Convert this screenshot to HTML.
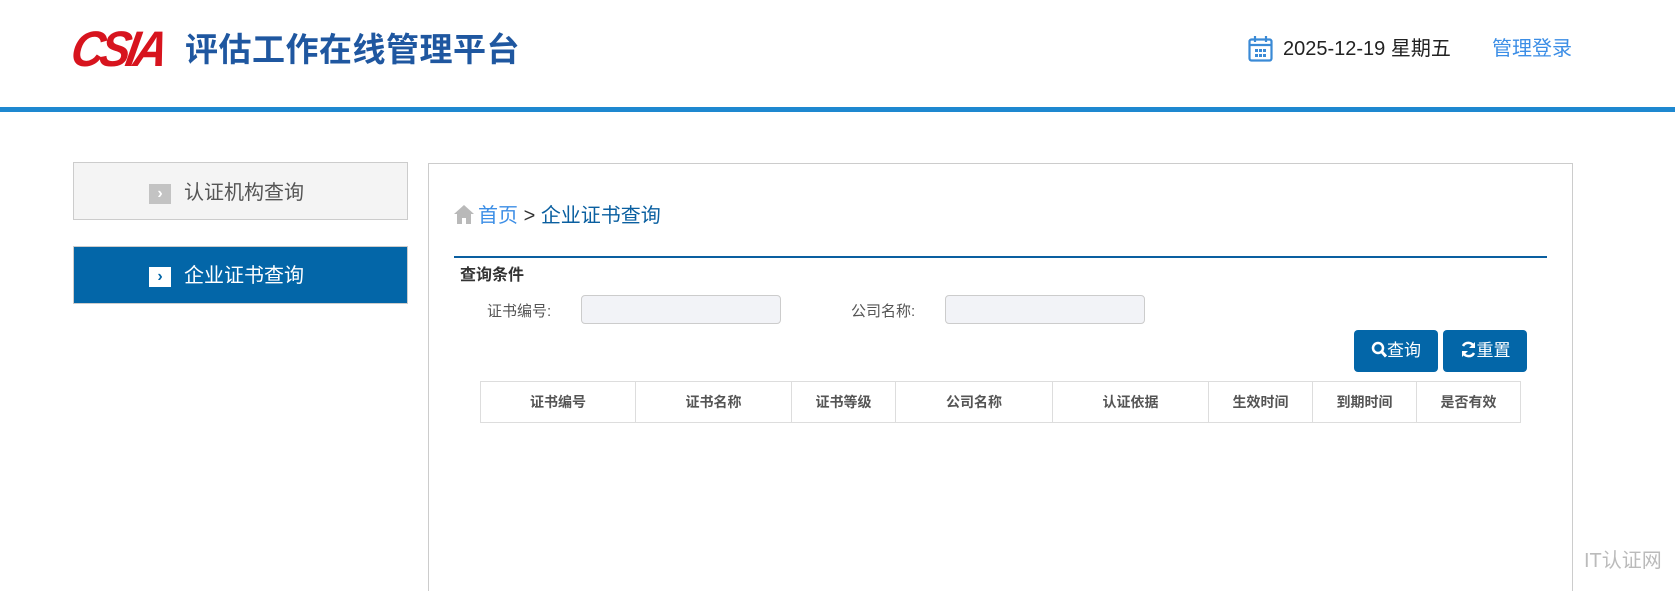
<!DOCTYPE html>
<html style="width:1675px;height:591px;overflow:hidden"><head><meta charset="utf-8"><style>
*{margin:0;padding:0;box-sizing:border-box}
body{width:1675px;height:591px;overflow:hidden;background:#fff;font-family:"Liberation Sans","Noto Sans CJK SC",sans-serif;position:relative}
.a{position:absolute;white-space:nowrap}
</style></head><body>
<div class="a" style="left:72px;top:24px;height:50px;color:#d7141e;font:italic bold 50px/50px 'Liberation Sans',sans-serif;letter-spacing:-5px;transform:skewX(-10deg) scaleX(0.92);transform-origin:left">CSIA</div>
<div class="a" style="left:185px;top:28px;font-size:33px;line-height:44px;font-weight:bold;color:#1f57a0;letter-spacing:0.5px">评估工作在线管理平台</div>
<svg class="a" style="left:1248px;top:35px" width="25" height="27" viewBox="0 0 25 27"><rect x="1.5" y="4.5" width="22" height="21" rx="2" fill="none" stroke="#3a8ad6" stroke-width="2.2"/><line x1="1.5" y1="10" x2="23.5" y2="10" stroke="#3a8ad6" stroke-width="2.2"/><line x1="7" y1="1" x2="7" y2="7" stroke="#3a8ad6" stroke-width="2.2"/><line x1="18" y1="1" x2="18" y2="7" stroke="#3a8ad6" stroke-width="2.2"/><g fill="#3a8ad6"><rect x="7" y="14" width="3" height="3"/><rect x="11" y="14" width="3" height="3"/><rect x="15" y="14" width="3" height="3"/><rect x="7" y="19" width="3" height="3"/><rect x="11" y="19" width="3" height="3"/><rect x="15" y="19" width="3" height="3"/></g></svg>
<div class="a" style="left:1283px;top:37px;font-size:20px;line-height:24px;color:#222">2025-12-19 星期五</div>
<div class="a" style="left:1492px;top:37px;font-size:20px;line-height:24px;color:#3c8ee6">管理登录</div>
<div class="a" style="left:0;top:107px;width:1675px;height:5px;background:#1e88d0"></div>

<div class="a" style="left:73px;top:162px;width:335px;height:58px;background:#f4f4f4;border:1px solid #ccc"></div>
<div class="a" style="left:149px;top:184px;width:22px;height:20px;background:#c3c3c3;color:#fff;font-size:16px;line-height:20px;text-align:center;font-weight:bold">›</div>
<div class="a" style="left:184px;top:180px;font-size:20px;line-height:26px;color:#555">认证机构查询</div>
<div class="a" style="left:73px;top:246px;width:335px;height:58px;background:#0366a8;border:1px solid #ccc"></div>
<div class="a" style="left:149px;top:267px;width:22px;height:20px;background:#fff;color:#0366a8;font-size:16px;line-height:20px;text-align:center;font-weight:bold">›</div>
<div class="a" style="left:184px;top:263px;font-size:20px;line-height:26px;color:#fff">企业证书查询</div>

<div class="a" style="left:428px;top:163px;width:1145px;height:428px;border:1px solid #ccc;border-bottom:none"></div>
<svg class="a" style="left:454px;top:205px" width="20" height="19" viewBox="0 0 20 19"><path d="M10 0L0 9h3v10h5v-6h4v6h5V9h3z" fill="#b9b9b9"/></svg>
<div class="a" style="left:478px;top:203px;font-size:20px;line-height:26px;color:#3c8ee6">首页 <span style="color:#333">&gt;</span> <span style="color:#0a5fa0">企业证书查询</span></div>
<div class="a" style="left:454px;top:256px;width:1093px;height:2px;background:#0a5fa0"></div>
<div class="a" style="left:460px;top:266px;font-size:16px;line-height:20px;font-weight:bold;color:#333">查询条件</div>
<div class="a" style="left:487px;top:302px;font-size:15px;line-height:20px;color:#555">证书编号:</div>
<div class="a" style="left:581px;top:295px;width:200px;height:29px;background:#f2f3f7;border:1px solid #ccc;border-radius:4px"></div>
<div class="a" style="left:851px;top:302px;font-size:15px;line-height:20px;color:#555">公司名称:</div>
<div class="a" style="left:945px;top:295px;width:200px;height:29px;background:#f2f3f7;border:1px solid #ccc;border-radius:4px"></div>
<div class="a" style="left:1354px;top:330px;width:84px;height:42px;background:#0366a8;border-radius:4px;color:#fff;font-size:17px;line-height:42px;text-align:center"><svg width="16" height="17" viewBox="0 0 16 17" style="vertical-align:-2px"><circle cx="7" cy="7" r="5" fill="none" stroke="#fff" stroke-width="2.5"/><line x1="10.5" y1="10.5" x2="15" y2="15.5" stroke="#fff" stroke-width="3"/></svg>查询</div>
<div class="a" style="left:1443px;top:330px;width:84px;height:42px;background:#0366a8;border-radius:4px;color:#fff;font-size:17px;line-height:42px;text-align:center"><svg width="17" height="17" viewBox="0 0 17 17" style="vertical-align:-2px"><path d="M14 6A6 6 0 0 0 3 5M3 11a6 6 0 0 0 11 1" fill="none" stroke="#fff" stroke-width="2.5"/><path d="M15 1v6h-6zM2 16v-6h6z" fill="#fff"/></svg>重置</div>
<table class="a" style="left:480px;top:381px;width:1041px;height:42px;border-collapse:collapse;font-size:14px;font-weight:bold;color:#555;text-align:center">
<tr><td style="border:1px solid #ddd;width:155px">证书编号</td><td style="border:1px solid #ddd;width:156px">证书名称</td><td style="border:1px solid #ddd;width:104px">证书等级</td><td style="border:1px solid #ddd;width:157px">公司名称</td><td style="border:1px solid #ddd;width:156px">认证依据</td><td style="border:1px solid #ddd;width:104px">生效时间</td><td style="border:1px solid #ddd;width:104px">到期时间</td><td style="border:1px solid #ddd">是否有效</td></tr></table>
<div class="a" style="left:1584px;top:548px;font-size:20px;line-height:26px;color:#bbb">IT认证网</div>
</body></html>
